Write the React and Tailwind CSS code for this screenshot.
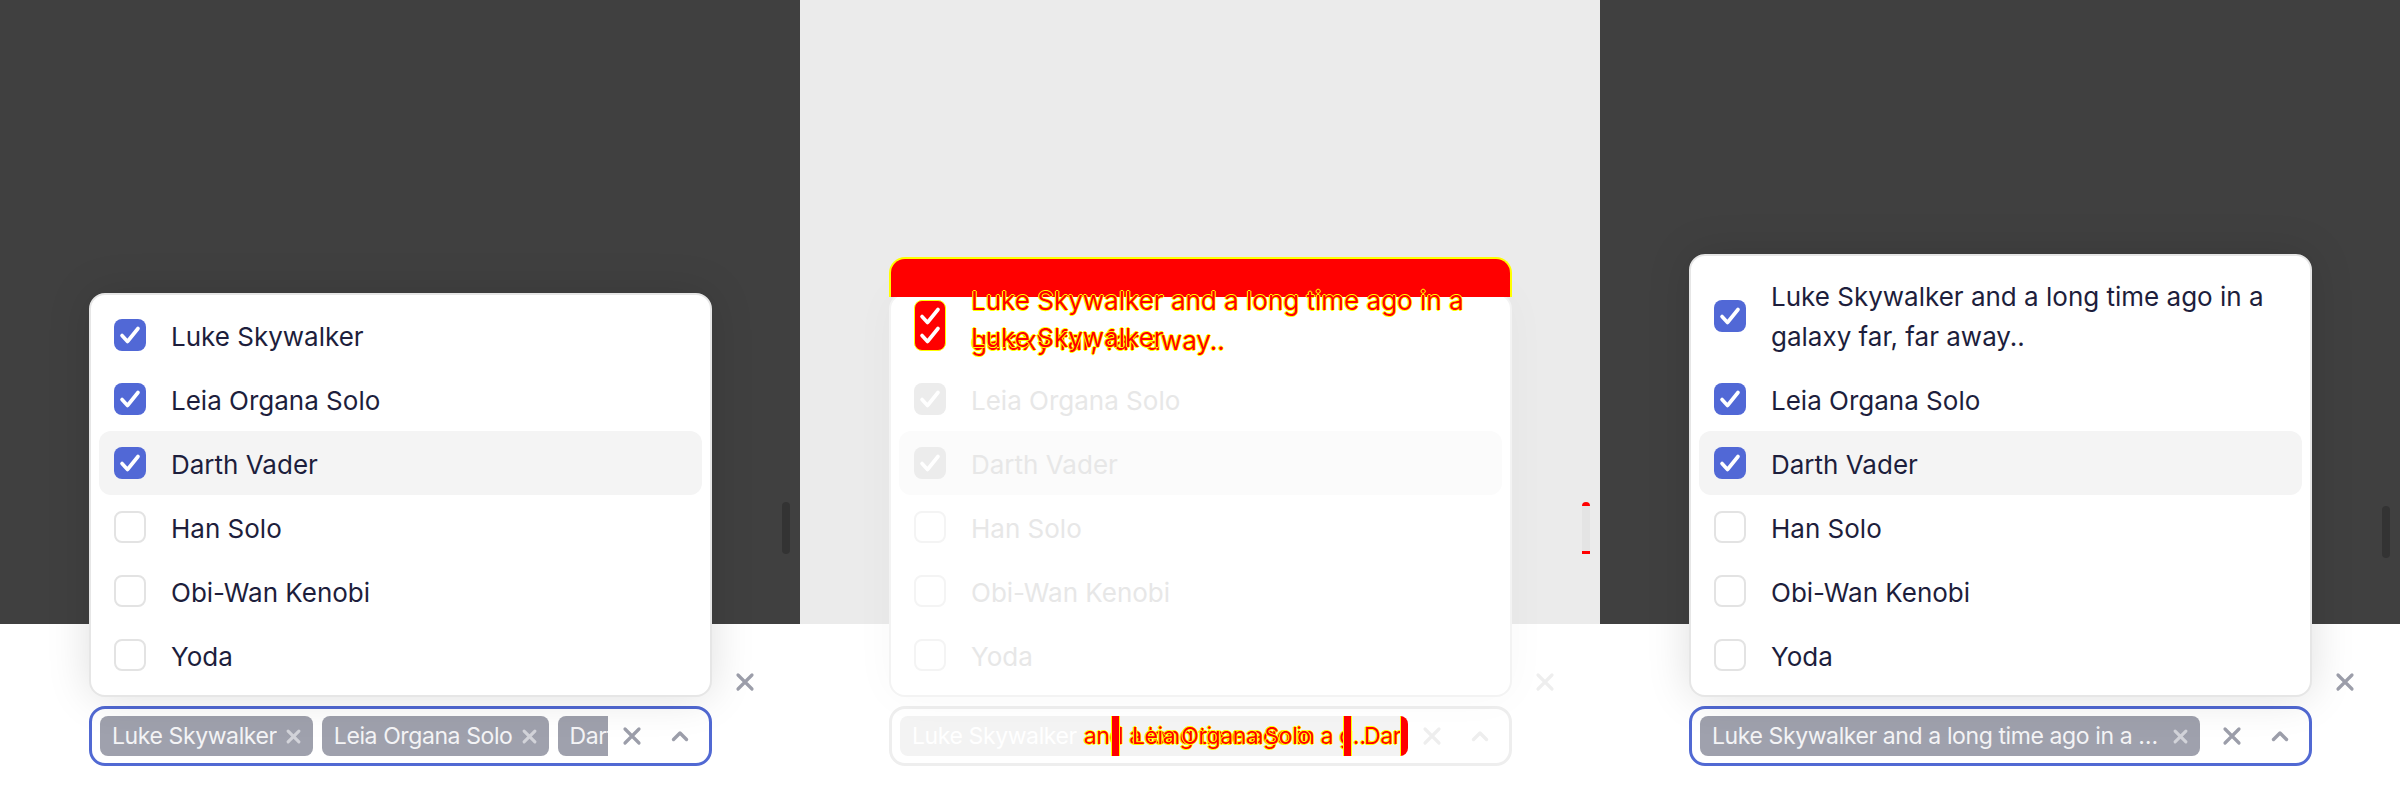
import React from "react";

const FONT = { fontFamily: "Inter, 'Noto Sans', sans-serif" };

const NAMES = ["Luke Skywalker", "Leia Organa Solo", "Darth Vader", "Han Solo", "Obi-Wan Kenobi", "Yoda"];
const LONG = "Luke Skywalker and a long time ago in a galaxy far, far away..";
const CHECKED = [true, true, true, false, false, false];

const NORMAL = {
  top: "bg-[#404040]",
  thumb: "bg-[#333333]",
  text: "text-[#1d1e3c]",
  on: "bg-[#5168d6]",
  off: "border-[#e3e3e3]",
  hl: "bg-[#f4f4f4]",
  card: "border-[#e6e6e6] shadow-[0_0_44px_rgba(0,0,0,0.13)]",
  select: "border-[#5169d3]",
  chip: "bg-[#9fa1ad]",
  chipText: "text-[#f4f4f6]",
  chipX: "#d2d3d9",
  icon: "#9c9eaa",
  label: "text-[#1d1e3c]",
};

const FADED = {
  top: "bg-[#ebebeb]",
  thumb: "bg-[#e4e4e4]",
  text: "text-[#e7e7e7]",
  on: "bg-[#ececec]",
  off: "border-[#f4f4f4]",
  hl: "bg-[#fbfbfb]",
  card: "border-[#f3f3f3] shadow-[0_0_44px_rgba(0,0,0,0.03)]",
  select: "border-[#eeeeee]",
  chip: "bg-[#f3f3f3]",
  chipText: "text-white",
  chipX: "#f8f8f8",
  icon: "#eeeeee",
  label: "text-[#eeeeee]",
};

const DIFF_TEXT = "text-[#ff0000] [text-shadow:1px_0_0_#ffff00,-1px_0_0_#ffff00,0_1px_0_#ffff00,0_-1px_0_#ffff00]";

function Check({ className = "" }) {
  return (
    <svg viewBox="0 0 32 32" className={className} fill="none">
      <polyline points="8,16.5 13.5,22.5 24,9.5" stroke="white" strokeWidth="3.6" strokeLinecap="round" strokeLinejoin="round" />
    </svg>
  );
}

function XIcon({ size = 22, color, width = 3.2 }) {
  return (
    <svg width={size} height={size} viewBox="0 0 22 22" fill="none">
      <path d="M4 4L18 18M18 4L4 18" stroke={color} strokeWidth={width} strokeLinecap="round" />
    </svg>
  );
}

function Chevron({ color }) {
  return (
    <svg width="22" height="22" viewBox="0 0 22 22" fill="none">
      <polyline points="4.5,14.5 11,8 17.5,14.5" stroke={color} strokeWidth="3.4" strokeLinecap="round" strokeLinejoin="round" />
    </svg>
  );
}

function Checkbox({ checked, p }) {
  if (checked) {
    return (
      <div className={`w-[32px] h-[32px] shrink-0 rounded-[8px] ${p.on} flex items-center justify-center`}>
        <Check className="w-[32px] h-[32px]" />
      </div>
    );
  }
  return <div className={`w-[32px] h-[32px] shrink-0 rounded-[8px] border-2 ${p.off} bg-white`} />;
}

function Row({ name, checked, highlight, p, children }) {
  return (
    <div className={`relative flex items-center gap-[25px] min-h-[64px] rounded-[12px] px-[15px] py-[10px] ${highlight ? p.hl : ""}`}>
      {children || (
        <>
          <Checkbox checked={checked} p={p} />
          <div className={`text-[26px] leading-[40px] pt-[3px] ${p.text}`}>{name}</div>
        </>
      )}
    </div>
  );
}

function DiffFirstRow() {
  return (
    <Row p={FADED}>
      <div className="w-[32px] h-[40px] shrink-0" />
      <div className="h-[40px]" />
      <div className="absolute left-[15px] top-[-3px] w-[32px] h-[51px] rounded-[8px] bg-[#ff0000] border border-[#ffff00]">
        <Check className="absolute left-[-1px] top-[-1px] w-[32px] h-[32px]" />
        <Check className="absolute left-[-1px] top-[18px] w-[32px] h-[32px]" />
      </div>
      <div className={`absolute left-[72px] top-[-22px] text-[26px] leading-[40px] ${DIFF_TEXT}`}>
        Luke Skywalker and a long time ago in a
      </div>
      <div className={`absolute left-[72px] top-[18px] text-[26px] leading-[40px] ${DIFF_TEXT}`}>galaxy far, far away..</div>
      <div className={`absolute left-[72px] top-[15px] text-[26px] leading-[40px] ${DIFF_TEXT}`}>Luke Skywalker</div>
    </Row>
  );
}

function Dropdown({ first, p, diff }) {
  return (
    <div className={`absolute left-[89px] bottom-[103px] w-[623px] rounded-[16px] border-2 bg-white p-[8px] ${p.card}`}>
      {diff && (
        <div className="absolute left-[-2px] right-[-2px] top-[-38px] h-[40px] rounded-t-[16px] bg-[#ff0000] border-2 border-b-0 border-[#ffff00]" />
      )}
      {NAMES.map((n, i) =>
        i === 0 && diff ? (
          <DiffFirstRow key={n} />
        ) : (
          <Row key={n} name={i === 0 ? first : n} checked={CHECKED[i]} highlight={i === 2} p={p} />
        )
      )}
    </div>
  );
}

function Chip({ text, p, className = "" }) {
  return (
    <div className={`h-[40px] shrink-0 rounded-[8px] ${p.chip} flex items-center gap-[8px] pl-[12px] pr-[11px] ${className}`}>
      <span className={`text-[23px] leading-[40px] tracking-[-0.4px] truncate ${p.chipText}`}>{text}</span>
      <span className="shrink-0">
        <XIcon size={17} color={p.chipX} width={4} />
      </span>
    </div>
  );
}

function DiffChips() {
  return (
    <div className="relative h-[40px] w-[508px] rounded-[8px] bg-[#f3f3f3] flex items-center pl-[12px] overflow-hidden tracking-[-0.4px]">
      <span className="text-[23px] leading-[40px] text-white whitespace-nowrap">Luke Skywalker</span>
      <span className={`text-[23px] leading-[40px] whitespace-nowrap ml-[7px] ${DIFF_TEXT}`}>and a long time ago in a g…</span>
      <span className={`absolute left-[232px] text-[23px] leading-[40px] whitespace-nowrap ${DIFF_TEXT}`}>Leia Organa Solo</span>
      <span className={`absolute left-[464px] text-[23px] leading-[40px] whitespace-nowrap ${DIFF_TEXT}`}>Dart</span>
      <div className="absolute left-[211px] top-0 h-[40px] w-[9px] bg-[#ff0000] border-x border-[#ffff00]" />
      <div className="absolute left-[443px] top-0 h-[40px] w-[9px] bg-[#ff0000] border-x border-[#ffff00]" />
      <div className="absolute left-[500px] top-0 h-[40px] w-[8px] bg-[#ff0000] border-l border-[#ffff00]" />
    </div>
  );
}

function Panel({ p, first, chips, diff, thumbTop }) {
  return (
    <div className="relative w-[800px] h-[800px] flex flex-col overflow-hidden" style={FONT}>
      <div className={`relative h-[624px] ${p.top}`}>
        <div className={`absolute right-[10px] w-[8px] h-[52px] rounded-full ${p.thumb}`} style={{ top: thumbTop }}>
          {diff && (
            <>
              <div className="absolute top-0 left-0 w-[8px] h-[4px] rounded-t-full bg-[#ff0000]" />
              <div className="absolute bottom-0 left-0 w-[8px] h-[3px] bg-[#ff0000]" />
            </>
          )}
        </div>
      </div>
      <div className="flex-1 bg-white pt-[38px] pl-[89px]">
        <div className="flex items-center h-[40px]">
          <div className={`w-[623px] text-[26px] leading-[40px] ${p.label}`}>Choose multiple</div>
          <div className="ml-[22px]">
            <XIcon color={p.icon} />
          </div>
        </div>
        <div className={`mt-[4px] w-[623px] h-[60px] rounded-[16px] border-[3px] ${p.select} flex items-center pl-[8px] pr-[18px]`}>
          <div className="w-[508px] shrink-0 overflow-hidden flex items-center gap-[9px]">
            {diff ? <DiffChips /> : chips.map((c) => <Chip key={c} text={c} p={p} className="max-w-[500px]" />)}
          </div>
          <div className="ml-[13px] flex items-center gap-[26px]">
            <XIcon color={p.icon} />
            <Chevron color={p.icon} />
          </div>
        </div>
      </div>
      <Dropdown first={first} p={p} diff={diff} />
    </div>
  );
}

export default function App() {
  return (
    <div className="flex w-[2400px] h-[800px] bg-white">
      <Panel p={NORMAL} first="Luke Skywalker" chips={["Luke Skywalker", "Leia Organa Solo", "Darth Vader"]} thumbTop={502} />
      <Panel p={FADED} first="Luke Skywalker" diff thumbTop={502} />
      <Panel p={NORMAL} first={LONG} chips={[LONG, "Leia Organa Solo", "Darth Vader"]} thumbTop={506} />
    </div>
  );
}
